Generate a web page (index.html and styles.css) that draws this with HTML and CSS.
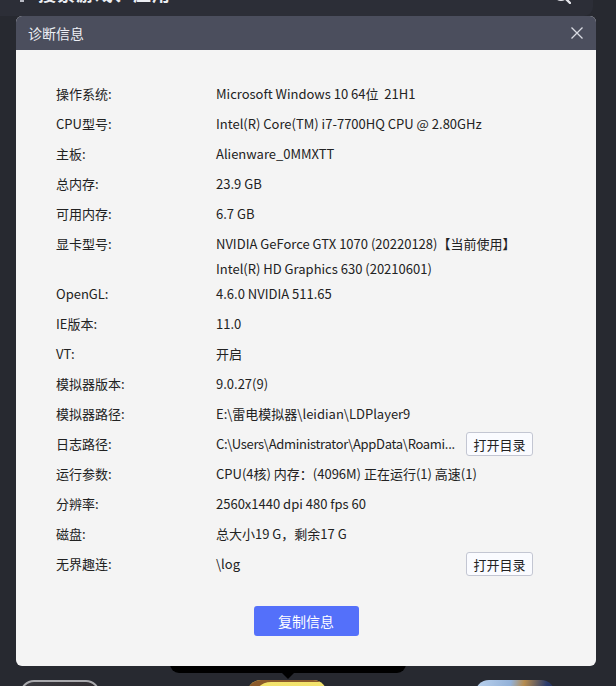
FILE: index.html
```html
<!DOCTYPE html>
<html lang="zh-CN">

<head>
    <meta charset="UTF-8">
    <meta name="viewport" content="width=device-width, initial-scale=1.0">
    <title>诊断信息</title>
    <link rel="stylesheet" href="styles.css">
</head>

<body>
    <!-- 背景页面 -->
    <header class="topBar">
        <span class="dot"></span>
        <span class="searchText">搜索游戏、应用</span>
        <svg class="searchIcon" width="18" height="18" viewBox="0 0 18 18">
            <circle cx="8" cy="8" r="6" fill="none" stroke="#e6e7ec" stroke-width="2.2" />
            <path d="M12.5 12.5 L17 17" stroke="#e6e7ec" stroke-width="2.4" stroke-linecap="round" />
        </svg>
    </header>

    <section class="appRow">
        <div class="appIcon app1"></div>
        <div class="appIcon app2"></div>
        <div class="appIcon app3"></div>
    </section>

    <div class="tip"></div>

    <!-- 诊断信息 弹窗 -->
    <div class="dialog">
        <div class="dialogHead">
            <span>诊断信息</span>
            <button class="closeBtn">
                <svg width="12" height="12" viewBox="0 0 12 12">
                    <path d="M0.5 0.5 L11.5 11.5 M11.5 0.5 L0.5 11.5" stroke="#d9dbe3" stroke-width="1.3" />
                </svg>
            </button>
        </div>
        <div class="dialogBody">
            <div class="infoList">
                <div class="row"><div class="label">操作系统:</div><div class="value">Microsoft Windows 10 64位&nbsp; 21H1</div></div>
                <div class="row"><div class="label">CPU型号:</div><div class="value">Intel(R) Core(TM) i7-7700HQ CPU @ 2.80GHz</div></div>
                <div class="row"><div class="label">主板:</div><div class="value">Alienware_0MMXTT</div></div>
                <div class="row"><div class="label">总内存:</div><div class="value">23.9 GB</div></div>
                <div class="row"><div class="label">可用内存:</div><div class="value">6.7 GB</div></div>
                <div class="row"><div class="label">显卡型号:</div>
                    <div class="value">
                        <div>NVIDIA GeForce GTX 1070 (20220128)【当前使用】</div>
                        <div class="subLine">Intel(R) HD Graphics 630 (20210601)</div>
                    </div>
                </div>
                <div class="row"><div class="label">OpenGL:</div><div class="value">4.6.0 NVIDIA 511.65</div></div>
                <div class="row"><div class="label">IE版本:</div><div class="value">11.0</div></div>
                <div class="row"><div class="label">VT:</div><div class="value">开启</div></div>
                <div class="row"><div class="label">模拟器版本:</div><div class="value">9.0.27(9)</div></div>
                <div class="row"><div class="label">模拟器路径:</div><div class="value">E:\雷电模拟器\leidian\LDPlayer9</div></div>
                <div class="row"><div class="label">日志路径:</div><div class="value tight">C:\Users\Administrator\AppData\Roami...</div><button class="openBtn">打开目录</button></div>
                <div class="row"><div class="label">运行参数:</div><div class="value">CPU(4核) 内存：(4096M) 正在运行(1) 高速(1)</div></div>
                <div class="row"><div class="label">分辨率:</div><div class="value">2560x1440 dpi 480 fps 60</div></div>
                <div class="row"><div class="label">磁盘:</div><div class="value">总大小19 G，剩余17 G</div></div>
                <div class="row"><div class="label">无界趣连:</div><div class="value">\log</div><button class="openBtn">打开目录</button></div>
            </div>
            <div class="actions">
                <button class="copyBtn">复制信息</button>
            </div>
        </div>
    </div>
</body>

</html>
```

FILE: styles.css
```css
* {
    margin: 0;
    padding: 0;
    box-sizing: border-box;
}

body {
    width: 616px;
    height: 686px;
    overflow: hidden;
    position: relative;
    background-color: #272930;
    font-family: "Microsoft YaHei", "Noto Sans CJK SC", sans-serif;
}

/* 背景页面 */
.topBar {
    width: 593px;
    height: 16px;
    background-color: #2c2e37;
    border-bottom-right-radius: 9px;
    position: relative;
    overflow: hidden;
}

.topBar .dot {
    position: absolute;
    left: 20px;
    top: 0;
    width: 4px;
    height: 2px;
    background-color: #b9bbc4;
}

.topBar .searchText {
    position: absolute;
    left: 38px;
    top: -19px;
    font-size: 18px;
    line-height: 24px;
    font-weight: bold;
    color: #eceef3;
    letter-spacing: 1px;
}

.topBar .searchIcon {
    position: absolute;
    left: 553px;
    top: -14px;
}

.appRow {
    display: flex;
    height: 6px;
    overflow: hidden;
    margin-top: 664px;
    padding-left: 20px;
    gap: 147px;
}

.appIcon {
    width: 80px;
    height: 60px;
    flex-shrink: 0;
    border-radius: 14px;
}

.app1 {
    border: 2px solid #a9a9ad;
    background: linear-gradient(160deg, #3a3a40 0%, #2a2326 60%, #5a1c1c 100%);
}

.app2 {
    background: linear-gradient(180deg, #f3e56f 0%, #e9c24a 100%);
    box-shadow: inset 10px 6px 0 -4px #8b5a2a;
}

.app3 {
    margin-left: 1px;
    background: linear-gradient(100deg, #bcd3ee 0%, #93b1d8 40%, #b58b4e 55%, #2a3b6c 80%, #1b2450 100%);
}

.tip {
    position: absolute;
    left: 170px;
    top: 640px;
    width: 236px;
    height: 33px;
    background-color: #000;
    border-radius: 9px;
}

.tip::after {
    content: "";
    position: absolute;
    left: 111px;
    bottom: -6px;
    border-left: 7px solid transparent;
    border-right: 7px solid transparent;
    border-top: 7px solid #000;
}

/* 弹窗 */
.dialog {
    position: absolute;
    left: 16px;
    top: 16px;
    width: 580px;
    height: 650px;
    border-radius: 6px;
    overflow: hidden;
    background-color: #f4f4f4;
}

.dialogHead {
    height: 34px;
    background-color: #4b4e5d;
    display: flex;
    align-items: center;
    justify-content: space-between;
    padding: 0 11px 0 12px;
    color: #eef0f5;
    font-size: 14px;
}

.closeBtn {
    border: none;
    background: none;
    width: 16px;
    height: 16px;
    display: flex;
    align-items: center;
    justify-content: center;
}

.dialogBody {
    padding: 29px 0 30px;
}

.infoList {
    margin: 0 63px 0 40px;
}

.row {
    display: flex;
    align-items: flex-start;
    min-height: 30px;
    font-size: 13px;
    color: #222;
}

.row .label {
    width: 160px;
    line-height: 30px;
    flex-shrink: 0;
}

.row .value {
    flex: 1;
    min-width: 0;
    line-height: 30px;
    white-space: nowrap;
}

.row .value.tight {
    letter-spacing: -0.3px;
}

.row .subLine {
    line-height: 20px;
}

.openBtn {
    width: 67px;
    height: 24px;
    margin: 3px 0 0 6px;
    flex-shrink: 0;
    background-color: #fafbff;
    border: 1px solid #c3c6d2;
    border-radius: 3px;
    font-family: inherit;
    font-size: 13px;
    color: #222;
}

.actions {
    display: flex;
    justify-content: center;
    margin-top: 27px;
}

.copyBtn {
    width: 105px;
    height: 30px;
    border: none;
    border-radius: 3px;
    background-color: #5470fa;
    color: #fff;
    font-family: inherit;
    font-size: 14px;
}
```
